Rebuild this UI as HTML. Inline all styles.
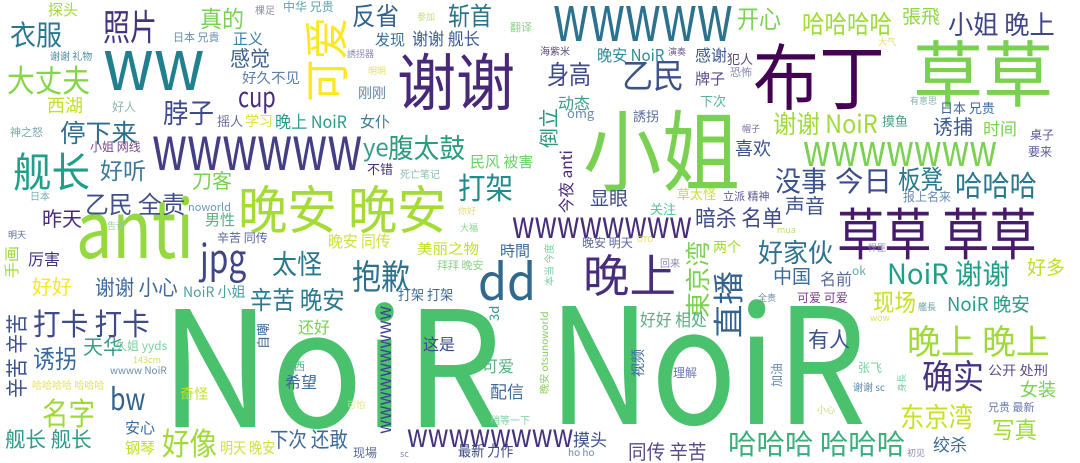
<!DOCTYPE html>
<html><head><meta charset="utf-8">
<style>
html,body{margin:0;padding:0;background:#fff;}
#c{position:relative;width:1080px;height:463px;overflow:hidden;background:#fff;font-family:"Noto Sans CJK SC","Liberation Sans",sans-serif;}
#c span{position:absolute;line-height:1;white-space:nowrap;margin-top:-0.08em;transform-origin:0 0;}
#c span.l{margin-top:-0.2em}
#c span.x{margin-top:-0.4em}
#c span.r{margin-top:0;margin-left:-0.08em}
#c span.r.x{margin-left:-0.4em}
</style></head><body><div id="c">
<span class="l" style="left:160px;top:309px;font-size:161px;color:#4ac16d;--w:342px">NoiR</span>
<span class="l" style="left:548px;top:306px;font-size:161px;color:#4ac16d;--w:318px">NoiR</span>
<span class="x" style="left:76px;top:200px;font-size:80px;color:#95d840;--w:118px;margin-top:-0.2em">anti</span>
<span style="left:753px;top:43px;font-size:72px;color:#440154;--w:132px">布丁</span>
<span style="left:913px;top:40px;font-size:72px;color:#7ad151;--w:140px">草草</span>
<span style="left:583px;top:110px;font-size:88px;color:#7ad151;--w:157px">小姐</span>
<span style="left:397px;top:52px;font-size:62px;color:#482878;--w:118px">谢谢</span>
<span class="r" style="left:305px;top:17px;font-size:45px;color:#fde725;--w:85px">可爱</span>
<span class="x" style="left:103px;top:52px;font-size:72px;color:#21808d;--w:102px">ww</span>
<span class="x" style="left:152px;top:137px;font-size:62px;color:#433e85;--w:210px">wwwwww</span>
<span class="x" style="left:553px;top:8px;font-size:64px;color:#2c728e;--w:180px">wwwww</span>
<span class="x" style="left:803px;top:143px;font-size:44px;color:#7ad151;--w:194px">wwwwwww</span>
<span class="x" style="left:512px;top:218px;font-size:38px;color:#472d7b;--w:180px">wwwwwwww</span>
<span class="x" style="left:407px;top:431px;font-size:32px;color:#46337e;--w:166px">wwwwwwww</span>
<span class="r x" style="left:382px;top:306px;font-size:19px;color:#414487;--w:128px">wwwwwwwww</span>
<span style="left:238px;top:185px;font-size:52px;color:#a5db36;--w:209px">晚安 晚安</span>
<span style="left:837px;top:208px;font-size:56px;color:#481a6c;--w:200px">草草 草草</span>
<span style="left:583px;top:254px;font-size:45px;color:#472d7b;--w:93px">晚上</span>
<span class="l" style="left:478px;top:264px;font-size:50px;color:#31688e;--w:58px">dd</span>
<span class="l" style="left:200px;top:244px;font-size:40px;color:#414487;--w:46px">jpg</span>
<span style="left:48px;top:3px;font-size:15px;color:#a0da39">探头</span>
<span style="left:103px;top:10px;font-size:36px;color:#46337e;--w:54px">照片</span>
<span style="left:10px;top:22px;font-size:28px;color:#2a788e;--w:52px">衣服</span>
<span style="left:200px;top:8px;font-size:23px;color:#7ad151;--w:44px">真的</span>
<span style="left:352px;top:5px;font-size:25px;color:#33638d;--w:47px">反省</span>
<span style="left:448px;top:5px;font-size:25px;color:#2c728e;--w:44px">斩首</span>
<span style="left:255px;top:6px;font-size:10px;color:#8a8fa8">棵足</span>
<span style="left:283px;top:2px;font-size:12px;color:#5ba3a8">中华 兄贵</span>
<span style="left:417px;top:13px;font-size:9px;color:#c8e070">参加</span>
<span style="left:510px;top:23px;font-size:11px;color:#8ed28a">翻译</span>
<span style="left:173px;top:33px;font-size:11px;color:#6a8fb0">日本 兄貴</span>
<span style="left:233px;top:32px;font-size:15px;color:#3b7fa0">正义</span>
<span style="left:375px;top:33px;font-size:15px;color:#3e6f9a">发现</span>
<span style="left:412px;top:30px;font-size:17px;color:#3f5b8e;--w:68px">谢谢 舰长</span>
<span style="left:50px;top:52px;font-size:10px;color:#4d8fa0">谢谢 礼物</span>
<span style="left:347px;top:50px;font-size:9px;color:#8a8ab0">誘拐器</span>
<span style="left:7px;top:65px;font-size:31px;color:#86d549;--w:83px">大丈夫</span>
<span style="left:230px;top:50px;font-size:21px;color:#3b5f8a;--w:40px">感觉</span>
<span style="left:242px;top:72px;font-size:14px;color:#5b7fa8;--w:58px">好久不见</span>
<span style="left:368px;top:67px;font-size:9px;color:#e8e060">明明</span>
<span style="left:358px;top:87px;font-size:14px;color:#5b8aa8">刚刚</span>
<span class="x" style="left:238px;top:93px;font-size:28px;color:#472d7b;--w:38px">cup</span>
<span style="left:47px;top:97px;font-size:18px;color:#c2df23">西湖</span>
<span style="left:112px;top:102px;font-size:12px;color:#8cb4b4">好人</span>
<span style="left:163px;top:100px;font-size:27px;color:#3e4a89;--w:51px">脖子</span>
<span style="left:217px;top:115px;font-size:13px;color:#6a6a9a">摇人</span>
<span style="left:245px;top:115px;font-size:14px;color:#e0e040">学习</span>
<span style="left:275px;top:113px;font-size:17px;color:#2a9a8a;--w:72px">晚上 NoiR</span>
<span style="left:360px;top:115px;font-size:15px;color:#3c7a9a">女仆</span>
<span style="left:60px;top:122px;font-size:25px;color:#2e6e8e;--w:77px">停下来</span>
<span style="left:10px;top:128px;font-size:11px;color:#7aaaaa">神之怒</span>
<span style="left:13px;top:152px;font-size:41px;color:#1f9e89;--w:77px">舰长</span>
<span class="x" style="left:363px;top:144px;font-size:24px;color:#3b9a8c">ye</span>
<span style="left:388px;top:135px;font-size:27px;color:#2a9d7f;--w:77px">腹太鼓</span>
<span style="left:90px;top:142px;font-size:12px;color:#7a4a8a">小姐 网线</span>
<span style="left:100px;top:160px;font-size:23px;color:#3b7a9a;--w:46px">好听</span>
<span style="left:367px;top:163px;font-size:13px;color:#46337e">不错</span>
<span style="left:400px;top:170px;font-size:10px;color:#8ac0a8">死亡笔记</span>
<span style="left:470px;top:155px;font-size:15px;color:#6ccf6a">民风 被害</span>
<span style="left:192px;top:172px;font-size:20px;color:#7ad151">刀客</span>
<span style="left:458px;top:173px;font-size:30px;color:#238a8d;--w:55px">打架</span>
<span style="left:30px;top:192px;font-size:10px;color:#7ab0b0">日本</span>
<span style="left:85px;top:193px;font-size:24px;color:#3f4f8a;--w:100px">乙民 全责</span>
<span class="x" style="left:188px;top:206px;font-size:11px;color:#6a9ab8">noworld</span>
<span style="left:42px;top:210px;font-size:20px;color:#482878">昨天</span>
<span style="left:205px;top:213px;font-size:15px;color:#5ab080">男性</span>
<span style="left:458px;top:207px;font-size:9px;color:#e0e070">你好</span>
<span style="left:107px;top:222px;font-size:9px;color:#8ed28a">告诉</span>
<span style="left:460px;top:224px;font-size:9px;color:#8ed28a">大福</span>
<span style="left:737px;top:8px;font-size:25px;color:#7ad151;--w:44px">开心</span>
<span style="left:802px;top:13px;font-size:25px;color:#a0da39;--w:90px">哈哈哈哈</span>
<span style="left:902px;top:8px;font-size:19px;color:#8fd744">張飛</span>
<span style="left:948px;top:13px;font-size:26px;color:#414487;--w:107px">小姐 晚上</span>
<span style="left:540px;top:47px;font-size:10px;color:#5a4a7a">海紫米</span>
<span style="left:597px;top:47px;font-size:16px;color:#2a8a9a;--w:67px">晚安 NoiR</span>
<span style="left:668px;top:48px;font-size:9px;color:#6a5a8a">演奏</span>
<span style="left:695px;top:47px;font-size:16px;color:#3f5b8e">感谢</span>
<span style="left:878px;top:38px;font-size:9px;color:#e0e070">大气</span>
<span style="left:547px;top:63px;font-size:26px;color:#3e4a89;--w:44px">身高</span>
<span style="left:622px;top:60px;font-size:34px;color:#3b528b;--w:62px">乙民</span>
<span style="left:727px;top:53px;font-size:13px;color:#5a4a7a">犯人</span>
<span style="left:730px;top:68px;font-size:11px;color:#8a8ab0">恐怖</span>
<span style="left:695px;top:72px;font-size:15px;color:#5a4a8a">牌子</span>
<span style="left:558px;top:95px;font-size:16px;color:#3b9a8a">动态</span>
<span style="left:700px;top:95px;font-size:13px;color:#5ab0a0">下次</span>
<span class="x" style="left:567px;top:111px;font-size:13px;color:#6a8ab0">omg</span>
<span style="left:633px;top:110px;font-size:13px;color:#5a6a9a">誘拐</span>
<span style="left:910px;top:97px;font-size:9px;color:#8ab0b0">有意思</span>
<span style="left:940px;top:102px;font-size:13px;color:#3f6a9a">日本 兄贵</span>
<span class="r" style="left:540px;top:108px;font-size:20px;color:#2a9a7a;--w:40px">倒立</span>
<span class="r" style="left:558px;top:150px;font-size:16px;color:#482878;--w:63px">今夜 anti</span>
<span style="left:773px;top:113px;font-size:25px;color:#a0da39;--w:105px">谢谢 NoiR</span>
<span style="left:882px;top:115px;font-size:13px;color:#4aa08a">摸鱼</span>
<span style="left:933px;top:118px;font-size:20px;color:#3f5b8e">诱捕</span>
<span style="left:983px;top:120px;font-size:17px;color:#7ad151">时间</span>
<span style="left:742px;top:125px;font-size:9px;color:#7a6a9a">帽子</span>
<span style="left:1030px;top:130px;font-size:12px;color:#5a5a9a">桌子</span>
<span style="left:735px;top:140px;font-size:18px;color:#3b528b">喜欢</span>
<span style="left:1028px;top:147px;font-size:12px;color:#5a5a9a">要来</span>
<span style="left:775px;top:168px;font-size:28px;color:#3b528b;--w:52px">没事</span>
<span style="left:835px;top:168px;font-size:28px;color:#3e4a89;--w:57px">今日</span>
<span style="left:898px;top:168px;font-size:26px;color:#2a788e;--w:45px">板凳</span>
<span style="left:955px;top:172px;font-size:29px;color:#2a788e;--w:82px">哈哈哈</span>
<span style="left:590px;top:190px;font-size:19px;color:#3e4a89">显眼</span>
<span style="left:677px;top:188px;font-size:13px;color:#c8dc30">草太怪</span>
<span style="left:723px;top:192px;font-size:11px;color:#5a5a8a">立派 精神</span>
<span style="left:903px;top:192px;font-size:12px;color:#6a8ab0">报上名来</span>
<span style="left:785px;top:197px;font-size:20px;color:#3b528b">声音</span>
<span style="left:650px;top:203px;font-size:13px;color:#5ac0a0">关注</span>
<span style="left:695px;top:208px;font-size:22px;color:#3e4a89;--w:88px">暗杀 名单</span>
<span class="x" style="left:777px;top:229px;font-size:9px;color:#c0e070">mua</span>
<span style="left:8px;top:231px;font-size:9px;color:#5a6a9a">明天</span>
<span style="left:217px;top:233px;font-size:12px;color:#5a6a9a">辛苦 同传</span>
<span style="left:328px;top:233px;font-size:16px;color:#d0e040;--w:63px">晚安 同传</span>
<span class="r" style="left:5px;top:246px;font-size:15px;color:#a0da39;--w:32px">手画</span>
<span style="left:28px;top:251px;font-size:16px;color:#46337e">厉害</span>
<span style="left:272px;top:251px;font-size:27px;color:#2a788e;--w:50px">太怪</span>
<span style="left:417px;top:243px;font-size:14px;color:#c2df23;--w:62px">美丽之物</span>
<span style="left:500px;top:244px;font-size:15px;color:#3f6a9a">時間</span>
<span style="left:352px;top:261px;font-size:34px;color:#2c728e;--w:58px">抱歉</span>
<span style="left:437px;top:261px;font-size:11px;color:#8ed28a">拜拜 晚安</span>
<span style="left:32px;top:278px;font-size:20px;color:#fde725">好好</span>
<span style="left:95px;top:279px;font-size:21px;color:#3f6a9a;--w:83px">谢谢 小心</span>
<span style="left:183px;top:286px;font-size:14px;color:#4aa0a0;--w:62px">NoiR 小姐</span>
<span style="left:250px;top:289px;font-size:25px;color:#2a788e;--w:95px">辛苦 晚安</span>
<span style="left:398px;top:289px;font-size:14px;color:#3f6a9a;--w:55px">打架 打架</span>
<span style="left:33px;top:309px;font-size:30px;color:#3e4a89;--w:117px">打卡 打卡</span>
<span class="r" style="left:7px;top:314px;font-size:22px;color:#3b528b;--w:84px">辛苦 辛苦</span>
<span style="left:298px;top:319px;font-size:16px;color:#7ad151">还好</span>
<span class="r l" style="left:490px;top:306px;font-size:13px;color:#2a9a8a;margin-left:-0.2em">3d</span>
<span class="r" style="left:257px;top:323px;font-size:13px;color:#3b6a9a">自嘲</span>
<span style="left:83px;top:338px;font-size:20px;color:#3b9a8a">天华</span>
<span style="left:115px;top:341px;font-size:12px;color:#7ad1a0">久姐 yyds</span>
<span style="left:423px;top:336px;font-size:16px;color:#3e4a89">这是</span>
<span style="left:33px;top:348px;font-size:25px;color:#3b6a9a;--w:44px">诱拐</span>
<span style="left:133px;top:356px;font-size:9px;color:#d0e060">143cm</span>
<span style="left:110px;top:366px;font-size:10px;color:#6a8ab0">wwww NoiR</span>
<span style="left:283px;top:362px;font-size:11px;color:#5ab080">东西</span>
<span style="left:482px;top:358px;font-size:16px;color:#5ab080">可爱</span>
<span style="left:285px;top:374px;font-size:16px;color:#3f6a9a">希望</span>
<span style="left:32px;top:381px;font-size:10px;color:#e8e060">哈哈哈哈 哈哈哈</span>
<span class="l" style="left:110px;top:388px;font-size:30px;color:#33638d;--w:35px">bw</span>
<span style="left:180px;top:388px;font-size:14px;color:#c2df23">奇怪</span>
<span style="left:490px;top:383px;font-size:17px;color:#3f6a9a">配信</span>
<span style="left:42px;top:398px;font-size:31px;color:#a0da39;--w:53px">名字</span>
<span style="left:347px;top:401px;font-size:9px;color:#e0e080">可怕</span>
<span style="left:125px;top:421px;font-size:15px;color:#3b6a9a">安心</span>
<span style="left:490px;top:416px;font-size:10px;color:#7ad1a0">稍等一下</span>
<span style="left:5px;top:431px;font-size:21px;color:#2a9a8a;--w:87px">舰长 舰长</span>
<span style="left:162px;top:428px;font-size:31px;color:#a0da39;--w:55px">好像</span>
<span style="left:270px;top:431px;font-size:21px;color:#3b6a9a;--w:78px">下次 还敢</span>
<span style="left:125px;top:441px;font-size:15px;color:#c2df23">钢琴</span>
<span style="left:220px;top:441px;font-size:15px;color:#d0e040;--w:55px">明天 晚安</span>
<span style="left:353px;top:448px;font-size:12px;color:#5a6a9a">现場</span>
<span class="x" style="left:400px;top:453px;font-size:9px;color:#8a8ab0">sc</span>
<span style="left:458px;top:444px;font-size:15px;color:#3e4a89;--w:55px">最新 力作</span>
<span style="left:582px;top:238px;font-size:12px;color:#5a6a9a">晚安 明天</span>
<span class="l" style="left:637px;top:238px;font-size:8px;color:#e0e060">OTO</span>
<span class="r" style="left:687px;top:241px;font-size:25px;color:#7ad151;--w:77px">東京湾</span>
<span class="r" style="left:713px;top:271px;font-size:31px;color:#33638d;--w:67px">直播</span>
<span style="left:713px;top:241px;font-size:14px;color:#a0da39">两个</span>
<span style="left:758px;top:241px;font-size:26px;color:#2c728e;--w:75px">好家伙</span>
<span style="left:868px;top:244px;font-size:9px;color:#8a8ab0">悍匪</span>
<span style="left:1027px;top:259px;font-size:19px;color:#c2df23">好多</span>
<span style="left:887px;top:261px;font-size:28px;color:#1f9e89;--w:123px">NoiR 谢谢</span>
<span style="left:773px;top:268px;font-size:19px;color:#3b6a9a">中国</span>
<span style="left:820px;top:271px;font-size:16px;color:#5a6a9a">名前</span>
<span class="x" style="left:852px;top:270px;font-size:12px;color:#5ab0a0">ok</span>
<span style="left:660px;top:259px;font-size:10px;color:#8a8ab0">回来</span>
<span class="r" style="left:545px;top:244px;font-size:10px;color:#7ad1a0">本当 今度</span>
<span style="left:758px;top:294px;font-size:9px;color:#6a8ab0">全责</span>
<span style="left:797px;top:293px;font-size:12px;color:#7a3a8a">可爱 可爱</span>
<span style="left:873px;top:291px;font-size:24px;color:#c8e020;--w:43px">现场</span>
<span style="left:918px;top:303px;font-size:9px;color:#6aa0a0">艦長</span>
<span style="left:947px;top:296px;font-size:19px;color:#2a9a8a;--w:83px">NoiR 晚安</span>
<span style="left:640px;top:311px;font-size:17px;color:#5ab080;--w:67px">好好 相处</span>
<span class="x" style="left:870px;top:317px;font-size:9px;color:#e0e060">wow</span>
<span class="r" style="left:540px;top:311px;font-size:10px;color:#8ad060;--w:83px">晚安 otsunoworld</span>
<span style="left:907px;top:326px;font-size:34px;color:#a0da39;--w:143px">晚上 晚上</span>
<span style="left:808px;top:331px;font-size:21px;color:#3b528b">有人</span>
<span class="r" style="left:632px;top:349px;font-size:14px;color:#3b6a9a">视频</span>
<span class="r" style="left:772px;top:363px;font-size:12px;color:#6a8ab0">加油</span>
<span style="left:673px;top:368px;font-size:12px;color:#6a7ab0">理解</span>
<span style="left:858px;top:363px;font-size:12px;color:#7ad1a0">张飞</span>
<span style="left:922px;top:361px;font-size:34px;color:#46337e;--w:62px">确实</span>
<span style="left:988px;top:364px;font-size:13px;color:#5a4a8a;--w:60px">公开 处刑</span>
<span style="left:853px;top:383px;font-size:10px;color:#5a8ab0">谢谢 sc</span>
<span class="r" style="left:898px;top:374px;font-size:9px;color:#7ad1a0">身長</span>
<span style="left:1020px;top:381px;font-size:18px;color:#7ad151">女装</span>
<span style="left:988px;top:403px;font-size:11px;color:#6a7ab0">兄贵 最新</span>
<span style="left:817px;top:406px;font-size:9px;color:#c0e080">小心</span>
<span style="left:900px;top:404px;font-size:27px;color:#c8e020;--w:73px">东京湾</span>
<span style="left:992px;top:419px;font-size:23px;color:#a0da39;--w:45px">写真</span>
<span style="left:573px;top:431px;font-size:17px;color:#3b528b">摸头</span>
<span style="left:728px;top:431px;font-size:28px;color:#3cae7c;--w:177px">哈哈哈 哈哈哈</span>
<span style="left:628px;top:443px;font-size:20px;color:#5a4a8a;--w:78px">同传 辛苦</span>
<span style="left:933px;top:436px;font-size:17px;color:#3b6a9a">绞杀</span>
<span class="x" style="left:568px;top:451px;font-size:10px;color:#6a8ab0">ho ho</span>
<span style="left:907px;top:449px;font-size:9px;color:#8a8ab0">初见</span>
</div>
<script>
document.querySelectorAll('#c span').forEach(function(s){
  var w=parseFloat(getComputedStyle(s).getPropertyValue('--w'));
  var rot=s.classList.contains('r');
  var nat=s.offsetWidth;
  var k=(w&&nat)?w/nat:1;
  var L=w||nat;
  if(rot){s.style.transform='translateY('+L+'px) rotate(-90deg) scaleX('+k+')';}
  else if(w){s.style.transform='scaleX('+k+')';}
});
</script>
</body></html>
